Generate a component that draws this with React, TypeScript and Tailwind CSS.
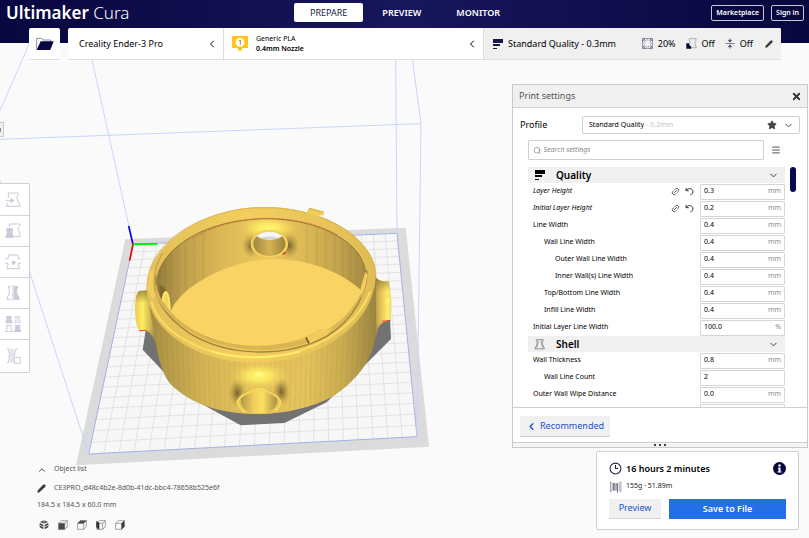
import React, { useState } from 'react';
import { ChevronDown, ChevronLeft, ChevronUp, Clock3, Link2, Menu, Pencil, Search, Star, X } from 'lucide-react';
import clsx from 'clsx';

interface Setting {
  id: string;
  label: string;
  value: string;
  unit?: string;
  depth?: number;
  changed?: boolean;
}

const QUALITY: Setting[] = [
  { id: 'layer-height', label: 'Layer Height', value: '0.3', unit: 'mm', changed: true },
  { id: 'initial-layer-height', label: 'Initial Layer Height', value: '0.2', unit: 'mm', changed: true },
  { id: 'line-width', label: 'Line Width', value: '0.4', unit: 'mm' },
  { id: 'wall-line-width', label: 'Wall Line Width', value: '0.4', unit: 'mm', depth: 1 },
  { id: 'outer-wall-line-width', label: 'Outer Wall Line Width', value: '0.4', unit: 'mm', depth: 2 },
  { id: 'inner-wall-line-width', label: 'Inner Wall(s) Line Width', value: '0.4', unit: 'mm', depth: 2 },
  { id: 'top-bottom-line-width', label: 'Top/Bottom Line Width', value: '0.4', unit: 'mm', depth: 1 },
  { id: 'infill-line-width', label: 'Infill Line Width', value: '0.4', unit: 'mm', depth: 1 },
  { id: 'initial-layer-line-width', label: 'Initial Layer Line Width', value: '100.0', unit: '%' },
];

const SHELL: Setting[] = [
  { id: 'wall-thickness', label: 'Wall Thickness', value: '0.8', unit: 'mm' },
  { id: 'wall-line-count', label: 'Wall Line Count', value: '2', depth: 1 },
  { id: 'outer-wall-wipe', label: 'Outer Wall Wipe Distance', value: '0.0', unit: 'mm' },
];

type Point = [number, number];

// Corners of the build plate: back left, back right, front right, front left
const PLATE: Point[] = [[399, 583], [1191, 550], [1251, 1160], [266, 1212]];
const CELLS = 22;

// Maps a spot on the unit square onto the plate in perspective
function project(u: number, v: number): Point {
  const [[x0, y0], [x1, y1], [x2, y2], [x3, y3]] = PLATE;
  const dx1 = x1 - x2;
  const dx2 = x3 - x2;
  const dy1 = y1 - y2;
  const dy2 = y3 - y2;
  const sx = x0 - x1 + x2 - x3;
  const sy = y0 - y1 + y2 - y3;
  const det = dx1 * dy2 - dx2 * dy1;
  const g = (sx * dy2 - dx2 * sy) / det;
  const h = (dx1 * sy - sx * dy1) / det;
  const w = g * u + h * v + 1;
  return [
    ((x1 - x0 + g * x1) * u + (x3 - x0 + h * x3) * v + x0) / w,
    ((y1 - y0 + g * y1) * u + (y3 - y0 + h * y3) * v + y0) / w,
  ];
}

const segment = (a: Point, b: Point) => `M${a[0]} ${a[1]}L${b[0]} ${b[1]}`;

const GRID = Array.from({ length: CELLS - 1 }, (_, i) => {
  const t = (i + 1) / CELLS;
  return segment(project(t, 0), project(t, 1)) + segment(project(0, t), project(1, t));
}).join('');

const FACETS = Array.from({ length: 44 }, (_, i) => {
  const x = 84 + i * 16;
  return `M${x} 300L${x + (420 - x) * 0.07} 670`;
}).join('');

function Scene() {
  return (
    <svg className="absolute left-0 top-0 h-[538px] w-[450px]" viewBox="0 -150 1350 1614" aria-hidden="true">
      <defs>
        <linearGradient id="wall" x1="80" x2="768" y1="0" y2="0" gradientUnits="userSpaceOnUse">
          <stop offset="0" stopColor="#a38a42" />
          <stop offset="0.1" stopColor="#b89c4a" />
          <stop offset="0.25" stopColor="#d4b455" />
          <stop offset="0.45" stopColor="#e6c45c" />
          <stop offset="0.7" stopColor="#e4c25c" />
          <stop offset="0.86" stopColor="#c9ab51" />
          <stop offset="1" stopColor="#9b8542" />
        </linearGradient>
        <linearGradient id="backWall" x1="108" x2="738" y1="0" y2="0" gradientUnits="userSpaceOnUse">
          <stop offset="0" stopColor="#927c3b" />
          <stop offset="0.12" stopColor="#bc9e4c" />
          <stop offset="0.3" stopColor="#dab755" />
          <stop offset="0.5" stopColor="#ebc75b" />
          <stop offset="0.7" stopColor="#deba56" />
          <stop offset="0.88" stopColor="#c0a24d" />
          <stop offset="1" stopColor="#a58c43" />
        </linearGradient>
        <linearGradient id="rim" x1="80" x2="768" y1="0" y2="0" gradientUnits="userSpaceOnUse">
          <stop offset="0" stopColor="#e3bf57" />
          <stop offset="0.45" stopColor="#f3ce5e" />
          <stop offset="1" stopColor="#e0bc56" />
        </linearGradient>
        <linearGradient id="boss" x1="0" x2="1" y1="0" y2="0">
          <stop offset="0" stopColor="#eccb55" />
          <stop offset="0.35" stopColor="#ffec63" />
          <stop offset="1" stopColor="#a98e42" />
        </linearGradient>
        <linearGradient id="bossRight" x1="0" x2="1" y1="0" y2="0">
          <stop offset="0" stopColor="#9b843f" />
          <stop offset="0.45" stopColor="#e2bf56" />
          <stop offset="0.85" stopColor="#fff06c" />
          <stop offset="1" stopColor="#f0d35c" />
        </linearGradient>
        <linearGradient id="bossShade" x1="0" x2="0" y1="0" y2="1">
          <stop offset="0" stopColor="#6b5a2a" stopOpacity="0.6" />
          <stop offset="0.25" stopColor="#6b5a2a" stopOpacity="0" />
          <stop offset="0.75" stopColor="#6b5a2a" stopOpacity="0" />
          <stop offset="1" stopColor="#6b5a2a" stopOpacity="0.4" />
        </linearGradient>
        <linearGradient id="bore" x1="0" x2="1" y1="0" y2="0">
          <stop offset="0" stopColor="#a08840" />
          <stop offset="0.5" stopColor="#d6b454" />
          <stop offset="1" stopColor="#9a823d" />
        </linearGradient>
        <linearGradient id="boreFront" x1="0" x2="1" y1="0" y2="0">
          <stop offset="0" stopColor="#b0954a" />
          <stop offset="0.35" stopColor="#f0cf5c" />
          <stop offset="0.6" stopColor="#fbe063" />
          <stop offset="1" stopColor="#a88e44" />
        </linearGradient>
        <radialGradient id="glow">
          <stop offset="0" stopColor="#fff96e" />
          <stop offset="0.4" stopColor="#ffec62" stopOpacity="0.85" />
          <stop offset="1" stopColor="#f0cc5c" stopOpacity="0" />
        </radialGradient>
        <radialGradient id="dim">
          <stop offset="0" stopColor="#5b4c22" stopOpacity="0.8" />
          <stop offset="0.45" stopColor="#6b5a2a" stopOpacity="0.4" />
          <stop offset="1" stopColor="#8f793a" stopOpacity="0" />
        </radialGradient>
        <clipPath id="bodyClip">
          <path d="M80 285L102 430C108 510 130 550 165 580C225 632 310 657 412 657C500 655 580 636 640 604C700 566 750 510 764 440L767 240C750 420 590 503 400 503C210 500 84 400 80 285Z" />
        </clipPath>
        <clipPath id="cavityClip">
          <path d="M108 265C112 170 240 71 440 70C610 70 735 150 738 235C736 300 680 380 605 412C540 442 470 455 400 454C260 450 125 370 108 265Z" />
        </clipPath>
      </defs>

      <path d="M376 568L1217 533L1287 1190L228 1246Z" fill="#dbdbdb" />
      <path d="M399 583L1191 550L1251 1160L266 1212Z" fill="#f7f7f7" />
      <path d={GRID} stroke="#dedede" strokeWidth="2.5" fill="none" />
      <path d="M399 583L1191 550L1251 1160L266 1212Z" stroke="#a3b2e6" strokeWidth="3" fill="none" />
      <path
        d="M90 -24L0 182M0 268L1263 221L1236 20M274 20L399 583M1187 20L1191 550M1263 221L1251 1160M0 392L266 1212"
        stroke="#cad5fa"
        strokeWidth="3"
        fill="none"
      />
      <path d="M399 583L386 528" stroke="#0a00e6" strokeWidth="5" />
      <path d="M399 583L472 581" stroke="#00f000" strokeWidth="6" />
      <path d="M399 583L389 632" stroke="#f00000" strokeWidth="5" />

      <g transform="translate(360 435)">
        <path d="M78 400L68 464L135 535L245 627L362 691L493 684L620 622L740 505L813 432L810 370Z" fill="#727272" />

        {/* Side bosses */}
        <path d="M88 286L60 287C48 290 45 315 45 345C46 380 52 404 60 407L78 407C92 411 98 425 106 440L110 290Z" fill="url(#boss)" />
        <path d="M88 286L60 287C48 290 45 315 45 345C46 380 52 404 60 407L78 407C92 411 98 425 106 440L110 290Z" fill="url(#bossShade)" />
        <path d="M57 407H79" stroke="#e8442a" strokeWidth="3" />
        <path d="M766 245C775 258 790 260 806 258C812 280 814 340 812 377C785 378 774 388 768 425L755 300Z" fill="url(#bossRight)" />
        <path d="M766 245C775 258 790 260 806 258C812 280 814 340 812 377C785 378 774 388 768 425L755 300Z" fill="url(#bossShade)" />
        <ellipse cx="803" cy="318" rx="14" ry="24" fill="url(#glow)" />
        <path d="M786 379L812 376" stroke="#e8442a" strokeWidth="3" />

        {/* Outer wall */}
        <path
          d="M80 285C78 150 250 36 430 36C640 36 767 150 767 235L769 400C768 480 720 550 640 604C580 636 500 657 412 657C310 657 225 632 165 580C125 545 118 495 106 440Z"
          fill="url(#wall)"
        />
        <g clipPath="url(#bodyClip)">
          <path d={FACETS} stroke="#7e6a30" strokeOpacity="0.06" strokeWidth="6" />
          <ellipse cx="352" cy="594" rx="26" ry="42" fill="url(#dim)" />
          <ellipse cx="484" cy="590" rx="26" ry="42" fill="url(#dim)" />
          <ellipse cx="418" cy="542" rx="90" ry="42" fill="url(#glow)" />
        </g>
        <ellipse cx="418" cy="538" rx="13" ry="7" fill="#fffb8a" />
        <path d="M352 622A66 42 0 0 1 482 622Q476 650 458 655Q412 660 374 654Q356 645 352 622Z" fill="#e6c35a" />
        <path d="M362 616A55 37 0 0 1 472 616Q470 640 448 649L436 655H394L382 648Q362 636 362 616Z" fill="url(#boreFront)" />
        <path d="M352 622A66 42 0 0 1 482 622Q478 640 464 648M352 622Q357 642 376 650" stroke="#f8d75f" strokeWidth="6" fill="none" />

        {/* Rim, outer ledge and raised lip */}
        <path
          d="M80 285C78 150 250 36 430 36C640 36 767 150 767 235C768 390 595 503 400 503C215 500 82 395 80 285Z"
          fill="url(#rim)"
        />
        <path d="M83 255C95 135 255 39 430 38C620 38 750 130 765 225" stroke="#d9b652" strokeWidth="3" fill="none" />
        <path d="M94 320C125 425 270 486 400 488C570 487 710 400 750 290" stroke="#fcdc62" strokeWidth="6" fill="none" />
        <path d="M275 469C355 492 455 492 540 470" stroke="#ffee6c" strokeWidth="5" fill="none" />
        <path d="M107 240C96 305 128 360 210 416C330 488 500 488 620 424C705 372 745 285 740 225" stroke="#9d853f" strokeWidth="4" fill="none" />
        <path d="M108 265C90 300 128 352 215 412C330 482 500 482 618 420C700 370 742 285 738 235Z" fill="#d9b553" />
        <path d="M84 285L78 276L84 270L88 229L104 226L98 262L106 300L98 315Z" fill="#f1cd5d" />
        <path d="M105 290C98 238 108 205 128 175" stroke="#c4a54c" strokeWidth="4" fill="none" />

        {/* Cavity */}
        <path d="M108 265C112 170 240 71 440 70C610 70 735 150 738 235C736 300 680 380 605 412C540 442 470 455 400 454C260 450 125 370 108 265Z" fill="url(#backWall)" />
        <g clipPath="url(#cavityClip)">
          <path d="M120 130V350M136 120V350M154 120V350M174 120V350M196 110V350M222 110V350M250 90V300M560 80V260M590 80V260M618 80V270M644 80V280M668 90V290M690 90V300M710 90V300" stroke="#735f2b" strokeOpacity="0.08" strokeWidth="7" />
          <ellipse cx="395" cy="152" rx="30" ry="36" fill="url(#dim)" />
          <ellipse cx="507" cy="152" rx="30" ry="38" fill="url(#dim)" />
          <ellipse cx="445" cy="98" rx="92" ry="34" fill="url(#glow)" />
          <path d="M150 362C150 335 190 290 230 265C310 214 390 192 470 192C560 195 650 222 722 284L740 300V460H120Z" fill="#f9d464" />
          <path d="M118 270C135 270 152 305 152 362L120 325Z" fill="#7d6930" />
          <ellipse cx="137" cy="328" rx="13" ry="40" fill="#f5d45d" />
          <path d="M130 355C126 320 130 295 138 292C148 300 150 330 150 362" stroke="#ffea66" strokeWidth="5" fill="none" />
        </g>
        <path d="M110 262C116 170 240 73 440 71C610 72 733 150 736 235" stroke="#947b38" strokeWidth="3" fill="none" />
        <path d="M215 132C280 92 360 71 445 70C525 71 600 88 655 122" stroke="#e05a33" strokeWidth="2" strokeDasharray="10 4" fill="none" />
        <path d="M106 282C118 375 260 450 400 454C470 455 540 442 605 404" stroke="#cfac4f" strokeWidth="2" fill="none" />
        <path d="M722 280L736 230L742 240L736 275L724 310Z" fill="#f2ce5e" />

        {/* Back port */}
        <ellipse cx="448" cy="147" rx="56" ry="42" fill="#e7c45a" />
        <ellipse cx="448" cy="146" rx="48" ry="37" fill="url(#bore)" />
        <path d="M409 124Q448 92 487 124Q470 134 448 135Q428 134 409 124Z" fill="#f5f5f5" />
        <path d="M418 129Q448 120 478 129Q448 140 418 129Z" fill="#d5d5d5" />
        <ellipse cx="448" cy="147" rx="53" ry="39" fill="none" stroke="#f5d25f" strokeWidth="5" />
        <path d="M488 178L497 172" stroke="#e02d1c" strokeWidth="4" />

        {/* Clips */}
        <path d="M562 48L568 38L612 50L610 62L600 60L596 66L562 55Z" fill="#f1cd5e" />
        <path d="M568 38L612 50V55L566 43Z" fill="#dab755" />
        <path d="M561 427L610 410L606 401L620 405L640 398L620 420L568 446Z" fill="#f1cc5d" />
        <path d="M558 427L567 445" stroke="#6c5a29" strokeWidth="5" />
      </g>
    </svg>
  );
}

const BLOCK = 'M10 3H40V8L36 13V21L46 43H4L14 21V13L10 8Z';

const TOOLS = [
  {
    name: 'Move',
    art: (
      <>
        <path d="M10 18V3H40V8L36 13V21L46 43H4L8 33" />
        <path d="M1 26H22" strokeWidth="3" />
        <path d="M18 20L27 26L18 32Z" fill="currentColor" />
      </>
    ),
  },
  {
    name: 'Scale',
    art: (
      <>
        <path d="M13 12V3H45V8L40 14V20L46 40H28" />
        <path d="M5 17H23V22L20 27L26 43H2L8 27L5 22Z" fill="currentColor" />
      </>
    ),
  },
  {
    name: 'Rotate',
    art: (
      <>
        <path d="M10 14V3H39V14M10 30L5 44H44L39 30" />
        <path d="M9 14A8 8 0 1 0 10 28M39 14A8 8 0 1 1 38 28" />
        <path d="M19 26H27" strokeWidth="3" />
        <path d="M24 20L32 26L24 32Z" fill="currentColor" />
      </>
    ),
  },
  {
    name: 'Mirror',
    art: (
      <>
        <path d="M19 5H9L13 14V22L5 43H19" />
        <path d="M24 0V48" strokeWidth="3" />
        <path d="M28 5H39L35 14V22L43 43H28Z" fill="currentColor" />
      </>
    ),
  },
  {
    name: 'Per Model Settings',
    art: (
      <>
        <path d="M4 1H19L17 9L22 20H2L7 9Z" fill="currentColor" />
        <path d="M31 1H45L43 9L48 20H28L33 9Z" strokeDasharray="3 2" fill="currentColor" fillOpacity="0.35" />
        <path d="M4 28H19L17 36L22 47H2L7 36Z" />
        <path d="M31 28H45L43 36L48 47H28L33 36Z" fill="currentColor" />
      </>
    ),
  },
  {
    name: 'Support Blocker',
    art: (
      <>
        <path d="M6 3H11M6 44H11M11 3L13 20L11 44M18 3V44M24 3V44M38 3H33L29 16V24" strokeWidth="3" />
        <path d="M28 28H46V46H28Z" />
      </>
    ),
  },
];

function LayersIcon({ className }: { className?: string }) {
  return (
    <svg viewBox="0 0 12 12" className={clsx('h-3 w-3', className)} fill="currentColor" aria-hidden="true">
      <path d="M1 1h10v4H1zM1 6h7v2H1zM1 10h4v1H1z" />
    </svg>
  );
}

function CubeIcon({ face }: { face: string }) {
  return (
    <svg viewBox="0 0 30 30" className="h-[10px] w-[10px]" fill="none" stroke="#777" strokeWidth="2" aria-hidden="true">
      {face === '3D' ? (
        <g fill="#484848" stroke="none">
          <path d="M15 1L27 6L15 11L3 6Z" />
          <path d="M2 9L13 14V28L2 22Z" />
          <path d="M28 9L17 14V28L28 22Z" />
          <path d="M15 1V12M2 15L13 21M28 15L17 21" stroke="#fff" strokeWidth="2" />
        </g>
      ) : (
        <>
          <path d="M10 2H28V20L20 28H2V10Z" />
          <path d="M2 10H20V28M20 10L28 2" />
          {face === 'Front' && <path d="M2 10H20V28H2Z" fill="#484848" />}
          {face === 'Top' && <path d="M2 10L10 2H28L20 10Z" fill="#484848" />}
          {face === 'Left' && <path d="M2 4L9 9V28L2 22Z" fill="#333" stroke="#333" />}
          {face === 'Right' && <path d="M20 10L28 2V20L20 28Z" fill="#333" />}
        </>
      )}
    </svg>
  );
}

function ValueBox({ children }: { children: React.ReactNode }) {
  return (
    <div className="flex h-4 w-[85px] items-center rounded-[1px] border border-[#d5d5d5] bg-white px-[3px]">{children}</div>
  );
}

function SettingRow({ setting }: { setting: Setting }) {
  return (
    <div className="flex h-[17px] items-center pl-[5px]">
      <label
        htmlFor={setting.id}
        className={clsx(
          'flex-1 text-black',
          setting.changed && 'italic',
          setting.depth === 1 && 'pl-[11px]',
          setting.depth === 2 && 'pl-[22px]'
        )}
      >
        {setting.label}
      </label>
      {setting.changed && (
        <div className="mr-[6px] flex gap-[5px] text-[#333]">
          <button aria-label={`Link ${setting.label}`}>
            <Link2 className="h-[9px] w-[9px] -rotate-45" />
          </button>
          <button aria-label={`Reset ${setting.label}`}>
            <svg viewBox="0 0 27 27" className="h-[9px] w-[9px]" fill="none" stroke="currentColor" strokeWidth="3" aria-hidden="true">
              <path d="M3 3V11H11" />
              <path d="M4 10C9 3 19 3 23 10C26 17 21 22 16 24" />
            </svg>
          </button>
        </div>
      )}
      <ValueBox>
        <input id={setting.id} defaultValue={setting.value} className="w-full min-w-0 flex-1 bg-transparent text-black outline-none" />
        <span className="text-[#8c8c8c]">{setting.unit}</span>
      </ValueBox>
    </div>
  );
}

function CategoryHeader({ title, icon }: { title: string; icon: React.ReactNode }) {
  return (
    <button className="flex h-4 w-full items-center bg-[#f0f0f0] px-[6px] text-[10px] font-semibold text-black">
      <span className="w-[22px]">{icon}</span>
      {title}
      <ChevronDown className="ml-auto h-[11px] w-[11px] text-[#333]" />
    </button>
  );
}

function PrintSettings() {
  return (
    <section className="flex w-[296px] flex-col border border-[#c9c9c9] bg-white">
      <header className="flex h-[23px] items-center justify-between border-b border-[#cfcfcf] bg-[#f0f0f0] pl-[6px] pr-[5px] text-[9px] text-[#555]">
        <h2>Print settings</h2>
        <button aria-label="Close">
          <X className="h-[11px] w-[11px] text-[#333]" strokeWidth={4} />
        </button>
      </header>

      <div className="mt-2 flex items-center justify-between px-[7px]">
        <label htmlFor="profile" className="text-[9px] text-black">Profile</label>
        <div className="flex h-[18px] w-[218px] items-center rounded-xs border border-[#cfcfcf] pl-[6px] pr-[5px] text-[7px]">
          <select id="profile" className="field-sizing-content appearance-none bg-transparent text-black outline-none">
            <option>Standard Quality</option>
          </select>
          <span className="ml-[2px] text-[#c4c4c4]">- 0.2mm</span>
          <Star className="ml-auto h-[10px] w-[10px] text-[#444]" fill="currentColor" />
          <ChevronDown className="ml-[6px] h-[11px] w-[11px] text-[#333]" />
        </div>
      </div>

      <div className="mt-[6px] flex items-center pl-[15px]">
        <label className="flex h-5 w-[236px] items-center gap-[2px] rounded-[1px] border border-[#cfcfcf] px-1">
          <Search className="h-[9px] w-[9px] text-[#888]" />
          <input
            type="search"
            aria-label="Search settings"
            placeholder="Search settings"
            className="w-full text-[7px] italic outline-none placeholder:text-[#888]"
          />
        </label>
        <button aria-label="Setting visibility" className="ml-[7px]">
          <Menu className="h-[10px] w-[10px] text-[#333]" />
        </button>
      </div>

      <div className="mt-[7px] flex h-[240px] gap-[5px] overflow-hidden pl-[15px]">
        <div className="w-[257px] text-[7px]">
          <CategoryHeader title="Quality" icon={<LayersIcon />} />
          {QUALITY.map((s) => <SettingRow key={s.id} setting={s} />)}
          <CategoryHeader
            title="Shell"
            icon={
              <svg viewBox="0 0 48 48" className="h-[11px] w-[11px]" fill="none" stroke="#888" strokeWidth="4" aria-hidden="true">
                <path d={BLOCK} />
                <path d="M18 6V18L12 40M32 6V18L38 40" strokeWidth="3" />
              </svg>
            }
          />
          {SHELL.map((s) => <SettingRow key={s.id} setting={s} />)}
          <div className="flex h-[17px] items-center justify-end">
            <ValueBox>
              <input aria-label="Top Surface Skin Layers" className="w-full min-w-0 bg-transparent outline-none" />
            </ValueBox>
          </div>
        </div>
        <div className="h-[25px] w-[6px] rounded-full bg-[#0a0850]" />
      </div>

      <div className="border-t border-[#cfcfcf] px-[7px] pb-[5px] pt-2">
        <button className="flex h-[21px] items-center gap-[3px] border-b border-[#cfcfcf] bg-[#f0f0f0] px-[6px] text-[9px] text-[#2152cf]">
          <ChevronLeft className="h-[11px] w-[11px]" strokeWidth={3} />
          Recommended
        </button>
      </div>
      <div className="flex h-[5px] items-center justify-center gap-[3px] border-t border-[#cfcfcf] bg-[#f5f5f5]">
        <span className="h-[2px] w-[2px] rounded-full bg-black" />
        <span className="h-[2px] w-[2px] rounded-full bg-black" />
        <span className="h-[2px] w-[2px] rounded-full bg-black" />
      </div>
    </section>
  );
}

function JobPanel() {
  return (
    <section className="mr-[9px] w-[203px] rounded-xs border border-[#d0d0d0] bg-white px-3 pb-[10px] pt-[10px]">
      <div className="flex items-center gap-1 text-[9px] font-semibold text-black">
        <Clock3 className="h-[13px] w-[13px] text-[#22224a]" strokeWidth={2} />
        16 hours 2 minutes
        <button aria-label="Print details" className="ml-auto">
          <svg viewBox="0 0 26 26" className="h-[13px] w-[13px]" aria-hidden="true">
            <circle cx="13" cy="13" r="13" fill="#08073f" />
            <circle cx="13" cy="7" r="2.5" fill="#fff" />
            <path d="M10 11H15V19H17V21H9V19H11V13H10Z" fill="#fff" />
          </svg>
        </button>
      </div>
      <div className="mt-[5px] flex items-center gap-1 text-[7px] text-[#222]">
        <svg viewBox="0 0 36 36" className="h-3 w-[13px]" fill="none" stroke="#777788" strokeWidth="2" aria-hidden="true">
          <path d="M3 2V33M34 2V33M3 2L8 7V28L3 33M34 2L29 7V28L34 33" />
          <path d="M12 6V29M16 6V29M20 6V29M24 6V35" strokeWidth="3" />
        </svg>
        155g · 51.89m
      </div>
      <div className="mt-[6px] flex gap-2 text-[9px]">
        <button className="h-5 w-[52px] border-b border-[#d5d5d5] bg-[#f0f0f0] text-[#2152cf]">Preview</button>
        <button className="h-5 flex-1 bg-[#246ee8] font-semibold text-white">Save to File</button>
      </div>
    </section>
  );
}

function StageBar() {
  return (
    <div className="relative -mt-[15px] flex h-8 gap-2 pl-[29px] pr-7 text-[9px] text-black">
      <button aria-label="Open File" className="flex w-[31px] items-center justify-center rounded-xs border-b border-[#ddd] bg-white">
        <svg viewBox="0 0 54 42" className="h-[14px] w-[18px]" aria-hidden="true">
          <path d="M2 37V4H17L21 9H44V14" fill="none" stroke="#55557a" strokeWidth="2" />
          <path d="M14 13H53L43 39H2Z" fill="#08073f" />
        </svg>
      </button>
      <div className="flex min-w-0 flex-1 divide-x divide-[#ddd] overflow-hidden rounded-xs border-b border-[#ddd] bg-white">
        <button className="flex w-[156px] items-center justify-between pl-[11px] pr-[5px]">
          Creality Ender-3 Pro
          <ChevronLeft className="h-3 w-3" />
        </button>
        <button className="flex w-[260px] items-center gap-2 pl-2 pr-[5px] text-left">
          <svg viewBox="0 0 48 48" className="h-4 w-4" aria-hidden="true">
            <path d="M0 0H48V36H33L24 47L15 36H0Z" fill="#ffc71d" />
            <circle cx="24" cy="19" r="13" fill="#fff" />
            <path d="M21 15L25 12V26" fill="none" stroke="#b08a1a" strokeWidth="3" />
          </svg>
          <span className="flex-1 text-[7px] leading-[10px]">
            Generic PLA
            <br />
            <b className="font-semibold">0.4mm Nozzle</b>
          </span>
          <ChevronLeft className="h-3 w-3" />
        </button>
        <button className="flex flex-1 items-center bg-[#f0f0f0] px-2">
          <LayersIcon className="mr-1 text-[#191744]" />
          Standard Quality - 0.3mm
          <span className="ml-auto flex items-center gap-[5px]">
            <svg viewBox="0 0 34 34" className="h-[11px] w-[11px]" fill="none" stroke="#55557a" strokeWidth="2" aria-hidden="true">
              <path d="M1 1H33V33H1Z" />
              <circle cx="17" cy="17" r="11" strokeDasharray="4 2" />
              <path d="M1 10L10 1M24 1L33 10M1 24L10 33M33 24L24 33M7 1V7H1M27 1V7H33M1 27H7V33M33 27H27V33" />
            </svg>
            20%
          </span>
          <span className="ml-[10px] flex items-center gap-[5px]">
            <svg viewBox="0 0 34 34" className="h-[11px] w-[11px]" fill="none" stroke="#8888a0" strokeWidth="2" aria-hidden="true">
              <path d="M10 2H31V7L27 14L32 30H16" />
              <path d="M1 16H9L12 24L16 26V33H1Z" fill="#08073f" stroke="none" />
              <path d="M10 2V8L13 14L11 20" />
            </svg>
            Off
          </span>
          <span className="ml-[10px] flex items-center gap-[5px]">
            <svg viewBox="0 0 30 34" className="h-[11px] w-[10px]" fill="none" stroke="#44446a" strokeWidth="2" aria-hidden="true">
              <path d="M1 17H29M15 1V12M15 22V33" />
              <path d="M10 7H20L15 13ZM10 27H20L15 21Z" fill="#44446a" />
            </svg>
            Off
          </span>
          <Pencil className="ml-3 h-2 w-2 text-[#333]" fill="currentColor" />
        </button>
      </div>
    </div>
  );
}

export default function App() {
  const [stage, setStage] = useState('PREPARE');

  return (
    <div className="relative flex min-h-screen flex-col overflow-hidden bg-[#fafafa] font-['Noto_Sans',sans-serif]">
      <Scene />

      <header className="relative grid h-[43px] grid-cols-[1fr_auto_1fr] items-start bg-linear-to-r from-[#08073f] via-[#18165c] to-[#08073f] pl-[6px] pr-[5px] text-white">
        <h1 className="text-[17px] font-light leading-[25px]">
          <b className="font-semibold">Ultimaker</b> Cura
        </h1>
        <nav className="mt-[3px] flex gap-[3px] text-[9px]">
          {['PREPARE', 'PREVIEW', 'MONITOR'].map((name) => (
            <button
              key={name}
              onClick={() => setStage(name)}
              className={clsx('h-[19px] rounded-xs px-4', stage === name ? 'bg-white text-[#191744]' : 'font-semibold')}
            >
              {name}
            </button>
          ))}
        </nav>
        <div className="mt-[5px] flex justify-end gap-[7px] text-[7px] font-semibold">
          <button className="h-4 rounded-xs border border-[#c8c8d0] bg-[#08073f] px-1">Marketplace</button>
          <button className="h-4 rounded-xs border border-[#c8c8d0] bg-[#08073f] px-1">Sign in</button>
        </div>
      </header>

      <StageBar />

      <main className="relative flex flex-1 justify-between">
        <div className="flex flex-col">
          <button aria-label="Show toolbar" className="mt-[62px] h-[15px] w-1 border border-l-0 border-[#ccc] bg-[#f0f0f0]">
            <span className="block h-1 w-px bg-[#888]" />
          </button>
          <div className="mt-[46px] w-[30px] divide-y divide-[#d5d5d5] rounded-r-xs border border-l-0 border-[#d0d0d0] bg-white py-px">
            {TOOLS.map((tool) => (
              <button key={tool.name} aria-label={tool.name} className="flex h-[31px] w-full items-center justify-center pr-1 text-[#cbc9da]">
                <svg viewBox="0 0 48 48" className="h-4 w-4" fill="none" stroke="currentColor" strokeWidth="3" aria-hidden="true">
                  {tool.art}
                </svg>
              </button>
            ))}
          </div>

          <div className="mb-[10px] ml-[37px] mt-auto text-[7px] text-[#555]">
            <button className="flex h-[18px] items-center gap-[7px]">
              <ChevronUp className="h-[10px] w-[10px] text-[#222]" />
              Object list
            </button>
            <div className="flex h-[19px] items-center gap-2">
              <Pencil className="h-[9px] w-[9px] text-[#333]" fill="currentColor" />
              CE3PRO_d48c4b2e-8d0b-41dc-bbc4-78658b525e6f
            </div>
            <p className="leading-[14px]">184.5 x 184.5 x 60.0 mm</p>
            <div className="mt-2 flex gap-[9px] pl-[2px]">
              {['3D', 'Front', 'Top', 'Left', 'Right'].map((face) => (
                <button key={face} aria-label={`${face} view`}>
                  <CubeIcon face={face} />
                </button>
              ))}
            </div>
          </div>
        </div>

        <div className="mr-px flex flex-col items-end justify-between gap-[3px] pb-[10px] pt-6">
          <PrintSettings />
          <JobPanel />
        </div>
      </main>
    </div>
  );
}
